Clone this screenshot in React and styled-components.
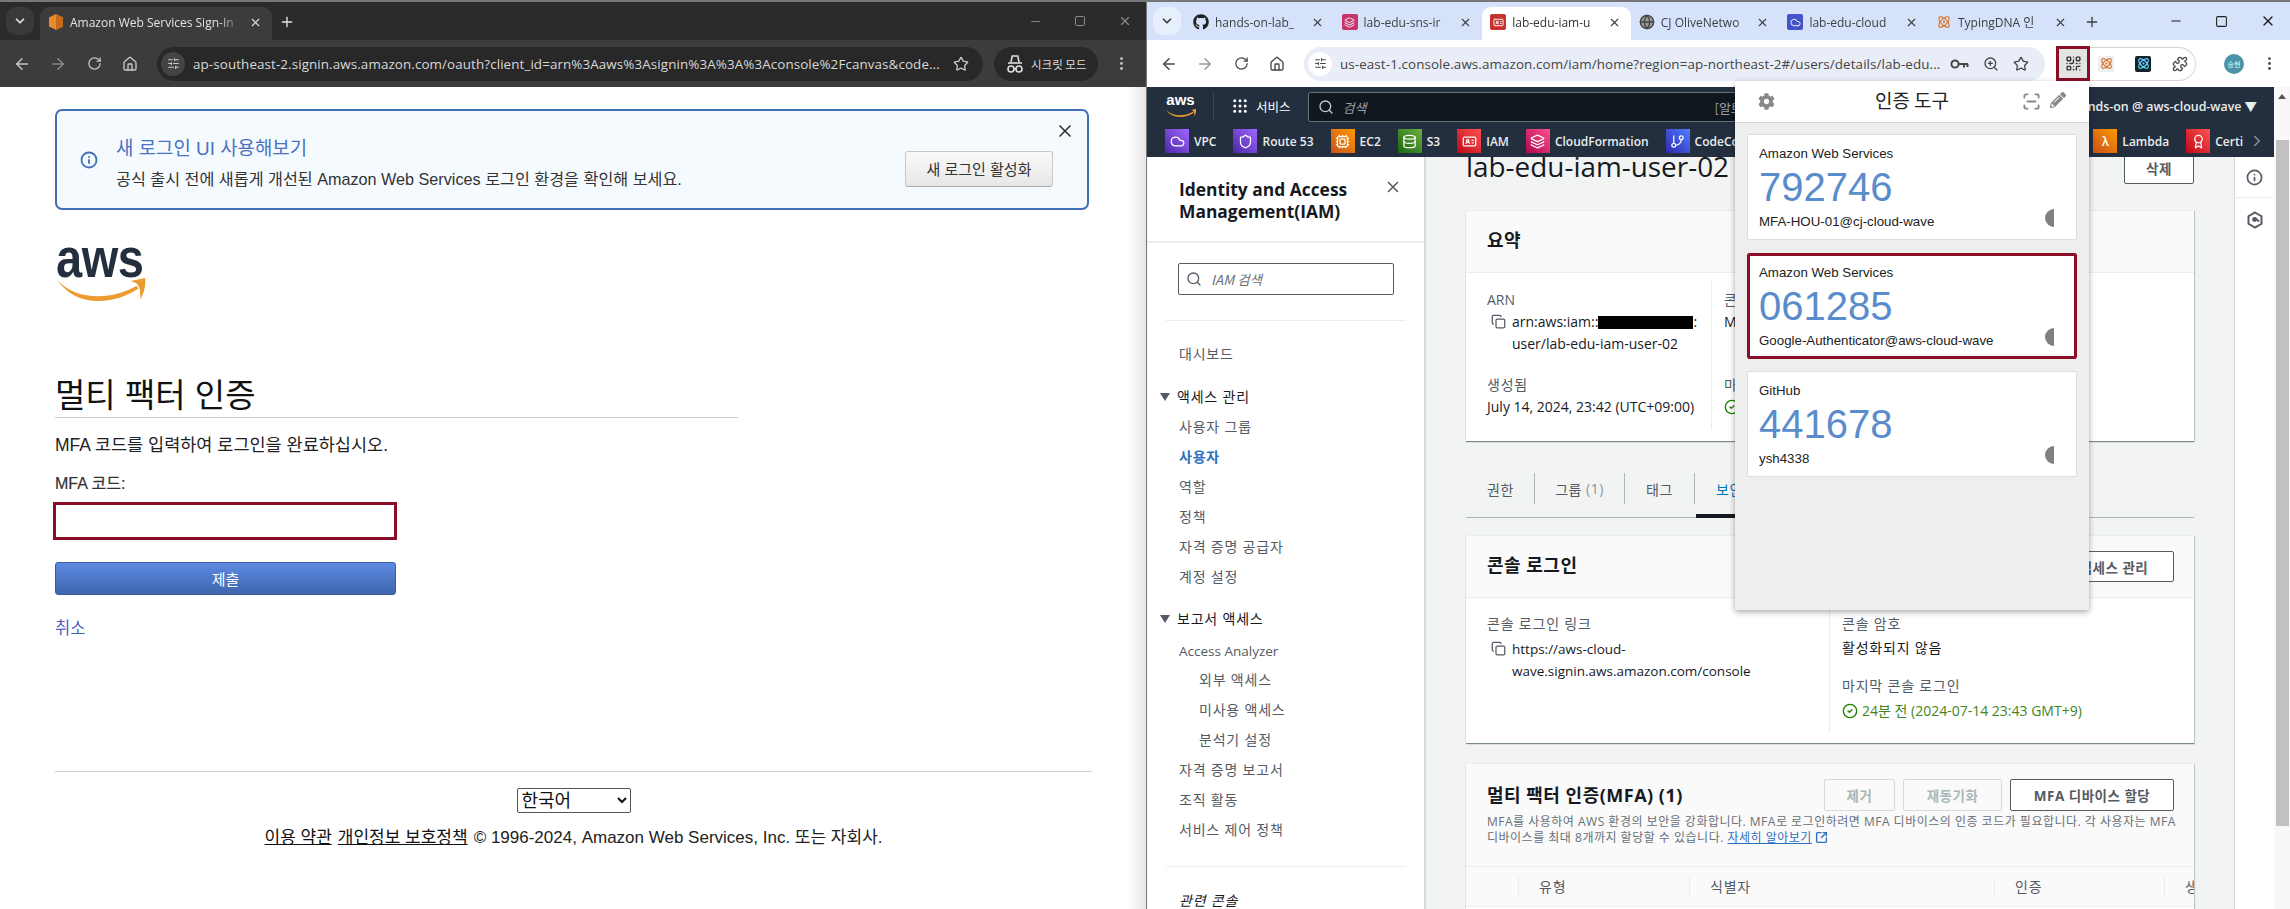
import React from 'react';
import styled, { createGlobalStyle } from 'styled-components';
import {
	ArrowLeft,
	ArrowRight,
	ChevronDown,
	ChevronRight,
	CircleCheck,
	Copy,
	House,
	Info,
	Minus,
	MoreVertical,
	Plus,
	Puzzle,
	QrCode,
	RotateCw,
	ScanLine,
	Search,
	SlidersHorizontal,
	Square,
	Star,
	SquareArrowOutUpRight,
	X,
	ZoomIn,
	Globe,
	Cloud,
	Shield,
	Cpu,
	Database,
	IdCard,
	Layers,
	GitBranch,
	Award,
	Atom,
	Grip,
} from 'lucide-react';
import { FaGithub, FaCog, FaPencilAlt } from 'react-icons/fa';

const KR = '"Noto Sans CJK KR", sans-serif';
const ARIAL = '"Liberation Sans", "Noto Sans CJK KR", sans-serif';
const UI = '"Open Sans", "Noto Sans CJK KR", sans-serif';

const GlobalStyle = createGlobalStyle`
	html, body {
		margin: 0;
		padding: 0;
		background: #fff;
	}
	* {
		box-sizing: border-box;
	}
`;

const Screen = styled.div`
	display: grid;
	grid-template-columns: 1146px 1144px;
	width: 2290px;
	height: 909px;
	overflow: hidden;
`;

const Window = styled.div`
	position: relative;
	display: flex;
	flex-direction: column;
	height: 909px;
	overflow: hidden;
	background: #fff;
	border-left: ${(p) => (p.$light ? '1px solid #777' : 'none')};
`;

const TabBar = styled.div`
	display: flex;
	align-items: flex-end;
	height: 40px;
	flex-shrink: 0;
	padding-left: 6px;
	background: ${(p) => (p.$light ? '#d5e2fa' : '#2b2b2b')};
	border-top: 2px solid #777;
	color: ${(p) => (p.$light ? '#3c4043' : '#e3e3e3')};
`;

const TabSearch = styled.div`
	display: flex;
	align-items: center;
	justify-content: center;
	width: 28px;
	height: 28px;
	align-self: center;
	margin-right: ${(p) => (p.$light ? '4px' : '6px')};
	border-radius: 10px;
	background: ${(p) => (p.$light ? '#e8effc' : '#3a3a3a')};
`;

const Tab = styled.div`
	display: flex;
	align-items: center;
	gap: 6px;
	height: 33px;
	width: ${(p) => p.$width || 148.6}px;
	padding: 0 10px 3px 8px;
	flex-shrink: 0;
	border-radius: 9px 9px 0 0;
	background: ${(p) => (p.$active ? p.$activeBg : 'transparent')};
	font: 12px ${UI};
`;

const TabTitle = styled.span`
	flex: 1;
	min-width: 0;
	overflow: hidden;
	white-space: nowrap;
	color: ${(p) => (p.$active ? '#333' : 'inherit')};
	-webkit-mask-image: linear-gradient(90deg, #000 85%, transparent);
`;

const Favicon = styled.span`
	display: flex;
	align-items: center;
	justify-content: center;
	width: 16px;
	height: 16px;
	flex-shrink: 0;
	border-radius: 2px;
	background: ${(p) => p.$bg || 'transparent'};
	color: ${(p) => p.$color || '#fff'};
`;

const NewTab = styled.div`
	display: flex;
	align-items: center;
	height: 36px;
	margin-left: 7px;
`;

const WindowControls = styled.div`
	display: flex;
	align-items: center;
	gap: 32px;
	margin-left: auto;
	padding-right: 14px;
	height: 38px;
	color: ${(p) => (p.$light ? '#222' : '#8a8a8a')};
`;

const Toolbar = styled.div`
	display: flex;
	align-items: center;
	height: 47px;
	flex-shrink: 0;
	padding: 0 0 0 13px;
	background: ${(p) => (p.$light ? '#fff' : '#3c3c3c')};
	color: ${(p) => (p.$light ? '#474747' : '#c7c7c7')};
`;

const ToolIcon = styled.span`
	display: flex;
	align-items: center;
	justify-content: center;
	width: 18px;
	margin-right: 18px;
	flex-shrink: 0;
	opacity: ${(p) => (p.$dim ? 0.55 : 1)};
`;

const Omnibox = styled.div`
	display: flex;
	align-items: center;
	width: ${(p) => p.$width}px;
	height: 34px;
	padding: 0 ${(p) => (p.$light ? 16 : 14)}px 0 4px;
	flex-shrink: 0;
	border-radius: 17px;
	background: ${(p) => (p.$light ? '#e8edf8' : '#282828')};
`;

const SiteChip = styled.span`
	display: flex;
	align-items: center;
	justify-content: center;
	width: 24px;
	height: 24px;
	margin-right: 8px;
	flex-shrink: 0;
	border-radius: 50%;
	background: ${(p) => (p.$light ? '#fff' : '#444')};
`;

const UrlText = styled.span`
	flex: 1;
	overflow: hidden;
	white-space: nowrap;
	font: 13.4px ${UI};
	letter-spacing: 0.1px;
	color: ${(p) => (p.$light ? '#444' : '#d8d8d8')};
`;

const OmniIcons = styled.span`
	display: flex;
	align-items: center;
	gap: 14px;
	margin-left: 4px;
`;

const IncognitoPill = styled.div`
	display: flex;
	align-items: center;
	gap: 7px;
	width: 104px;
	height: 34px;
	margin-left: 11px;
	padding-left: 12px;
	border-radius: 17px;
	background: #282828;
	font: 11.5px ${KR};
	color: #ddd;
`;

const MenuDots = styled.span`
	display: flex;
	margin-left: ${(p) => p.$left}px;
`;

const ExtRed = styled.span`
	display: flex;
	align-items: center;
	justify-content: center;
	width: 34px;
	height: 35px;
	margin-left: 11px;
	border: 3px solid #8b0d26;
	background: #e4e4e4;
	color: #333;
`;

const ExtPill = styled.div`
	display: flex;
	align-items: center;
	gap: 21px;
	width: 106px;
	height: 34px;
	padding: 0 0 0 8px;
	border: 1px solid #d5d5d5;
	border-left: none;
	border-radius: 0 17px 17px 0;
`;

const Avatar = styled.span`
	display: flex;
	align-items: center;
	justify-content: center;
	width: 20px;
	height: 20px;
	margin-left: 28px;
	border-radius: 50%;
	background: #4b93a8;
	color: #dff;
	font: 7px ${KR};
`;

/* left page */
const LoginPage = styled.div`
	flex: 1;
	padding: 22px 0 0 55px;
	font-family: ${ARIAL};
	color: #111;
`;

const Banner = styled.div`
	position: relative;
	display: flex;
	align-items: center;
	width: 1034px;
	height: 101px;
	padding: 0 34px 0 23px;
	border: 2px solid #3f6fb5;
	border-radius: 7px;
	background: #f5faff;
`;

const BannerText = styled.div`
	flex: 1;
	margin-left: 18px;
	padding-top: 5px;
`;

const BannerTitle = styled.div`
	font: 18.9px/26px ${ARIAL};
	color: #4a72c0;
`;

const BannerSub = styled.div`
	margin-top: 7px;
	font: 16.2px/20px ${ARIAL};
	color: #333;
`;

const BannerButton = styled.button`
	width: 148px;
	height: 36px;
	margin-top: 18px;
	border: 1px solid #c8c8c8;
	border-bottom-color: #aaa;
	border-radius: 3px;
	background: linear-gradient(#fafafa, #e6e6e6);
	font: 15px ${ARIAL};
	color: #333;
`;

const BannerClose = styled.span`
	position: absolute;
	top: 10px;
	right: 12px;
	display: flex;
	color: #333;
`;

const Logo = styled.div`
	width: 92px;
	height: 58px;
	margin-top: 33px;
`;

const LogoWord = styled.div`
	height: 35px;
	padding-left: 1px;
	font: bold 47px/24px ${ARIAL};
	letter-spacing: -0.5px;
	color: #232f3e;
	transform: scaleY(1.2);
	transform-origin: top;
`;

const LoginHeading = styled.h1`
	width: 683px;
	height: 44px;
	margin: 73px 0 0;
	border-bottom: 1px solid #ccc;
	font: 400 33px/44px ${ARIAL};
	color: #111;
`;

const LoginIntro = styled.p`
	margin: 15px 0 0;
	font: 17.5px/24px ${ARIAL};
	color: #222;
`;

const LoginLabel = styled.label`
	display: block;
	margin-top: 17px;
	font: 16px/20px ${ARIAL};
	-webkit-text-stroke: 0.2px #333;
	color: #333;
`;

const MfaInput = styled.input`
	display: block;
	width: 344px;
	height: 38px;
	margin: 8px 0 0 -2px;
	border: 3px solid #8b0d26;
	outline: none;
	background: #fff;
`;

const SubmitButton = styled.button`
	display: block;
	width: 341px;
	height: 33px;
	margin-top: 22px;
	border: 1px solid #3b5c9c;
	border-radius: 3px;
	background: linear-gradient(#5d8ae2, #3f66ad);
	font: 15px ${ARIAL};
	color: #fff;
`;

const CancelLink = styled.a`
	display: block;
	margin-top: 23px;
	font: 16.5px/20px ${ARIAL};
	color: #4a5fc0;
`;

const FooterRule = styled.div`
	width: 1037px;
	margin-top: 133px;
	border-top: 1px solid #ccc;
`;

const FooterBlock = styled.div`
	display: flex;
	flex-direction: column;
	align-items: center;
	width: 1037px;
	padding-top: 16px;
`;

const LangSelect = styled.select`
	width: 114px;
	height: 25px;
	padding: 0;
	border: 1px solid #555;
	border-radius: 2px;
	background: #fff;
	font: 18px ${ARIAL};
	color: #111;
`;

const FooterText = styled.div`
	margin-top: 13px;
	font: 17px/24px ${ARIAL};
	color: #222;
	a {
		color: #111;
		text-decoration: underline;
		margin-right: 6px;
	}
`;

const EdgeShade = styled.div`
	position: absolute;
	top: 87px;
	right: 0;
	bottom: 0;
	width: 18px;
	background: linear-gradient(90deg, rgba(0, 0, 0, 0), rgba(0, 0, 0, 0.1));
	pointer-events: none;
`;

/* console */
const ConsoleFrame = styled.div`
	display: flex;
	flex: 1;
	min-height: 0;
`;

const ConsoleColumn = styled.div`
	display: flex;
	flex-direction: column;
	flex: 1;
	min-width: 0;
`;

const Scrollbar = styled.div`
	display: flex;
	flex-direction: column;
	align-items: center;
	width: 16px;
	flex-shrink: 0;
	background: #f8f8f8;
`;

const ScrollArrow = styled.span`
	width: 0;
	height: 0;
	margin-top: 7px;
	border: 4px solid transparent;
	border-top: none;
	border-bottom: 5px solid #555;
`;

const ScrollThumb = styled.span`
	width: 13px;
	height: 686px;
	margin-top: 41px;
	background: #c1c1c1;
`;

const NavTop = styled.div`
	display: flex;
	align-items: center;
	height: 38px;
	padding-left: 18px;
	background: #232f3e;
	font: 600 13px ${UI};
	color: #fff;
`;

const NavLogo = styled.div`
	width: 31px;
	font: bold 15px/12px ${ARIAL};
	color: #fff;
	text-align: center;
`;

const NavDivider = styled.span`
	width: 1px;
	height: 26px;
	margin: 0 17px;
	background: #414750;
`;

const ServicesLabel = styled.span`
	margin-left: 7px;
	font: 12.5px ${KR};
`;

const GlobalSearch = styled.div`
	display: flex;
	align-items: center;
	gap: 9px;
	width: 440px;
	height: 30px;
	margin: 2px 0 0 17px;
	padding-left: 9px;
	border: 1px solid #687078;
	border-radius: 2px;
	background: #10171f;
	font: italic 13px ${KR};
	color: #9aa0a6;
`;

const SearchHint = styled.span`
	margin-left: auto;
	width: 32px;
	overflow: hidden;
	white-space: nowrap;
	font: 13px ${KR};
`;

const AccountMenu = styled.div`
	margin-left: auto;
	padding-right: 17px;
	white-space: nowrap;
	font: 600 12.4px ${UI};
	color: #eaeded;
`;

const NavBar2 = styled.div`
	display: flex;
	align-items: center;
	gap: 17px;
	height: 32px;
	padding: 0 8px 0 18px;
	background: #232f3e;
	overflow: hidden;
`;

const NavChevron = styled(ChevronRight)`
	margin-left: -12px;
	flex-shrink: 0;
`;

const Shortcut = styled.span`
	display: flex;
	align-items: center;
	gap: 5px;
	flex-shrink: 0;
	margin-left: ${(p) => (p.$push ? 'auto' : '0')};
	font: 600 12px ${UI};
	color: #eaeded;
`;

const ShortcutIcon = styled.span`
	display: flex;
	align-items: center;
	justify-content: center;
	width: 24px;
	height: 24px;
	color: #fff;
	background: linear-gradient(45deg, ${(p) => p.$from}, ${(p) => p.$to});
`;

const ConsoleBody = styled.div`
	display: flex;
	flex: 1;
	min-height: 0;
`;

const Sidebar = styled.aside`
	width: 279px;
	flex-shrink: 0;
	border-right: 2px solid #d5dbdb;
	background: #fff;
	font-family: ${UI};
`;

const SideHeader = styled.div`
	display: flex;
	justify-content: space-between;
	height: 86px;
	padding: 21px 22px 0 32px;
	border-bottom: 2px solid #eaeded;
`;

const SideTitle = styled.div`
	font: 700 17.4px/22px ${UI};
	color: #16191f;
`;

const SideSearch = styled.div`
	display: flex;
	align-items: center;
	gap: 9px;
	width: 216px;
	height: 32px;
	margin: 20px 0 0 31px;
	padding-left: 7px;
	border: 1px solid #545b64;
	border-radius: 2px;
	font: italic 13.5px ${KR};
	color: #687078;
`;

const SideRule = styled.div`
	width: 240px;
	margin: ${(p) => p.$top}px 0 0 19px;
	border-top: 1px solid #eaeded;
`;

const NavItem = styled.div`
	height: ${(p) => p.$h || 30}px;
	margin-top: ${(p) => p.$top || 0}px;
	padding-left: ${(p) => (p.$sub ? 52 : 32)}px;
	font: ${(p) => (p.$on ? 600 : 400)} ${(p) => (p.$latin ? 13.5 : 14)}px/30px ${UI};
	letter-spacing: ${(p) => (p.$latin ? 0 : 0.8)}px;
	color: ${(p) => (p.$on ? '#2f6fc0' : '#545b64')};
`;

const NavGroup = styled.div`
	display: flex;
	align-items: center;
	gap: 7px;
	height: 30px;
	margin-top: ${(p) => p.$top}px;
	padding-left: 13px;
	font: 400 14px/30px ${UI};
	letter-spacing: 0.8px;
	color: #16191f;
`;

const Caret = styled.span`
	width: 0;
	height: 0;
	border: 5px solid transparent;
	border-bottom: none;
	border-top: 8px solid #545b64;
`;

const RelatedLabel = styled.div`
	margin-top: 24px;
	padding-left: 32px;
	font: italic 14px/20px ${UI};
	letter-spacing: 0.8px;
	color: #16191f;
`;

const Main = styled.main`
	flex: 1;
	min-width: 0;
	overflow: hidden;
	padding: 0 40px;
	background: #f2f3f3;
	font-family: ${UI};
`;

const PageHead = styled.div`
	display: flex;
	justify-content: space-between;
	align-items: flex-end;
	height: 32px;
	margin-top: -5px;
`;

const PageTitle = styled.h1`
	margin: 0;
	font: 400 27.9px/36px ${UI};
	color: #16191f;
`;

const OutlineButton = styled.button`
	height: ${(p) => p.$h || 32}px;
	width: ${(p) => p.$w}px;
	padding: 0;
	flex-shrink: 0;
	border: 1px solid ${(p) => (p.$off ? '#d5dbdb' : '#545b64')};
	border-radius: 2px;
	background: ${(p) => (p.$off ? '#fafafa' : '#fff')};
	font: 700 13.5px ${UI};
	letter-spacing: 0.5px;
	color: ${(p) => (p.$off ? '#aab7b8' : '#545b64')};
`;

const Card = styled.section`
	margin-top: ${(p) => p.$top}px;
	height: ${(p) => p.$h}px;
	background: #fff;
	border-top: 1px solid #eaeded;
	box-shadow: 0 1px 1px 0 rgba(0, 28, 36, 0.4), 1px 1px 1px 0 rgba(0, 28, 36, 0.15);
`;

const CardHeader = styled.div`
	display: flex;
	align-items: center;
	justify-content: space-between;
	height: 62px;
	padding: 0 20px 0 21px;
	border-bottom: 1px solid #eaeded;
	background: #fafafa;
`;

const CardTitle = styled.h2`
	margin: 0 0 ${(p) => p.$lift || 0}px;
	font: 700 18px/24px ${UI};
	letter-spacing: 0.5px;
	color: #16191f;
`;

const SummaryGrid = styled.div`
	display: grid;
	grid-template-columns: 224px 1fr;
	padding: 6px 0 0 21px;
`;

const LinkGrid = styled.div`
	display: grid;
	grid-template-columns: 342px 1fr;
	padding: 11px 0 0 21px;
`;

const FieldColumn = styled.div`
	height: ${(p) => p.$h}px;
	padding: ${(p) => p.$pad}px 0 0 ${(p) => (p.$sep ? 12 : 0)}px;
	border-left: ${(p) => (p.$sep ? '1px solid #eaeded' : 'none')};
	white-space: nowrap;
`;

const FieldLabel = styled.div`
	margin-top: ${(p) => p.$top || 0}px;
	font: 14px/22px ${UI};
	letter-spacing: ${(p) => (p.$latin ? 0 : 0.8)}px;
	color: #545b64;
`;

const FieldValue = styled.div`
	display: flex;
	align-items: flex-start;
	gap: ${(p) => (p.$icon ? 6 : 4)}px;
	margin-top: ${(p) => p.$top || 0}px;
	padding-left: ${(p) => (p.$icon ? 4 : 0)}px;
	font: ${(p) => (p.$small ? 13.5 : 14)}px/22px ${UI};
	letter-spacing: ${(p) => (p.$kr ? 0.8 : 0)}px;
	color: ${(p) => p.$color || '#16191f'};
	svg {
		flex-shrink: 0;
		margin-top: 3px;
	}
`;

const Redacted = styled.span`
	display: inline-block;
	width: 95px;
	height: 13px;
	background: #000;
	vertical-align: -2px;
`;

const TabStrip = styled.div`
	display: flex;
	height: 45px;
	margin-top: 32px;
	border-bottom: 1px solid #aab7b8;
`;

const PageTab = styled.div`
	position: relative;
	display: flex;
	align-items: center;
	justify-content: ${(p) => (p.$center ? 'center' : 'flex-start')};
	width: ${(p) => p.$w}px;
	height: 31px;
	padding-left: ${(p) => (p.$center ? 0 : 21)}px;
	border-right: ${(p) => (p.$last ? 'none' : '1px solid #aab7b8')};
	font: 14px ${UI};
	letter-spacing: 0.5px;
	color: ${(p) => (p.$on ? '#0073bb' : '#545b64')};
	small {
		margin-left: 4px;
		font-size: 14px;
		color: #879596;
	}
	&::after {
		content: ${(p) => (p.$on ? '""' : 'none')};
		position: absolute;
		left: 1px;
		right: 0;
		bottom: -14px;
		height: 4px;
		background: #16191f;
	}
`;

const MfaHeader = styled.div`
	height: 103px;
	padding: 15px 20px 0 21px;
	border-bottom: 1px solid #eaeded;
	background: #fafafa;
`;

const MfaTop = styled.div`
	display: flex;
	align-items: center;
	justify-content: space-between;
	height: 32px;
`;

const MfaButtons = styled.div`
	display: flex;
	gap: 8px;
`;

const MfaDesc = styled.p`
	margin: 3px 0 0;
	font: 12px/16px ${UI};
	letter-spacing: 0.5px;
	white-space: nowrap;
	color: #687078;
	a {
		color: #2f6fc0;
		text-decoration: underline;
	}
`;

const OutLinkIcon = styled(SquareArrowOutUpRight)`
	vertical-align: -2px;
`;

const TableHead = styled.div`
	display: grid;
	grid-template-columns: 52px 171px 305px 170px 30px;
	height: 40px;
	align-items: center;
	border-bottom: 1px solid #eaeded;
	background: #fafafa;
	overflow: hidden;
`;

const HeadCell = styled.div`
	height: 20px;
	padding-left: 20px;
	border-left: ${(p) => (p.$plain ? 'none' : '1px solid #eaeded')};
	white-space: nowrap;
	font: 14px/20px ${UI};
	letter-spacing: 0.8px;
	color: #545b64;
`;

const RightRail = styled.div`
	display: flex;
	flex-direction: column;
	align-items: center;
	width: 40px;
	flex-shrink: 0;
	border-left: 1px solid #d5dbdb;
	background: #fff;
	color: #545b64;
`;

const RailButton = styled.div`
	display: flex;
	align-items: center;
	justify-content: center;
	width: 100%;
	height: ${(p) => p.$h}px;
	border-bottom: ${(p) => (p.$line ? '1px solid #eaeded' : 'none')};
`;

/* authenticator popup */
const Popup = styled.div`
	position: absolute;
	top: 81px;
	left: 588px;
	width: 354px;
	height: 529px;
	background: #eee;
	box-shadow: 0 2px 6px rgba(0, 0, 0, 0.35);
	font-family: ${ARIAL};
`;

const PopupHeader = styled.div`
	display: grid;
	grid-template-columns: 1fr auto 1fr;
	align-items: center;
	height: 42px;
	padding: 0 23px;
	background: #fff;
	border-bottom: 1px solid #d5d5d5;
	color: #888;
`;

const PopupTitle = styled.div`
	padding-bottom: 4px;
	font: 19px ${KR};
	color: #222;
`;

const PopupActions = styled.div`
	display: flex;
	justify-content: flex-end;
	gap: 9px;
`;

const EntryList = styled.div`
	display: flex;
	flex-direction: column;
	gap: 12.5px;
	padding: 11px 12px 0;
`;

const Entry = styled.div`
	position: relative;
	height: 106px;
	padding: 10px 11px;
	background: #fff;
	border: 1px solid ${(p) => (p.$marked ? '#8b0d26' : '#ddd')};
	box-shadow: ${(p) => (p.$marked ? 'inset 0 0 0 2px #8b0d26' : 'none')};
	border-radius: 2px;
`;

const EntryIssuer = styled.div`
	font: 13.3px/18px ${ARIAL};
	color: #222;
`;

const EntryCode = styled.div`
	margin-top: 2px;
	font: 40px/44px ${ARIAL};
	color: #5a8ccb;
`;

const EntryAccount = styled.div`
	margin-top: 4px;
	font: 13.3px/18px ${ARIAL};
	color: #222;
`;

const EntryTimer = styled.span`
	position: absolute;
	right: 22px;
	bottom: 12px;
	width: 9px;
	height: 18px;
	border-radius: 9px 0 0 9px;
	background: #808080;
`;

const shortcuts = [
	{ name: 'VPC', from: '#4d27a8', to: '#a166ff', Icon: Cloud },
	{ name: 'Route 53', from: '#4d27a8', to: '#a166ff', Icon: Shield },
	{ name: 'EC2', from: '#c8511b', to: '#ff9900', Icon: Cpu },
	{ name: 'S3', from: '#1b660f', to: '#6cae3e', Icon: Database },
	{ name: 'IAM', from: '#bd0816', to: '#ff5252', Icon: IdCard },
	{ name: 'CloudFormation', from: '#b0084d', to: '#ff4f8b', Icon: Layers },
	{ name: 'CodeCommit', from: '#2e27ad', to: '#527fff', Icon: GitBranch },
];

const entries = [
	{ issuer: 'Amazon Web Services', code: '792746', account: 'MFA-HOU-01@cj-cloud-wave' },
	{ issuer: 'Amazon Web Services', code: '061285', account: 'Google-Authenticator@aws-cloud-wave', marked: true },
	{ issuer: 'GitHub', code: '441678', account: 'ysh4338' },
];

const browserTabs = [
	{ title: 'hands-on-lab_', icon: <FaGithub size={16} color='#222' /> },
	{ title: 'lab-edu-sns-ir', icon: <Favicon $bg='#c7336b'><Layers size={11} /></Favicon> },
	{ title: 'lab-edu-iam-u', active: true, icon: <Favicon $bg='#c8322c'><IdCard size={11} /></Favicon> },
	{ title: 'CJ OliveNetwo', icon: <Globe size={16} color='#444' fill='#999' /> },
	{ title: 'lab-edu-cloud', icon: <Favicon $bg='#4353c9'><Cloud size={11} /></Favicon> },
	{ title: 'TypingDNA 인', icon: <Favicon $color='#d9772b'><Atom size={14} /></Favicon> },
];

function IncognitoIcon() {
	return (
		<svg width='18' height='22' viewBox='0 0 18 22' fill='none' stroke='currentColor' strokeWidth='1.6'>
			<path d='M5 9l1.2-6h5.6L13 9' />
			<path d='M2 10h14' />
			<circle cx='5' cy='16' r='3' />
			<circle cx='13' cy='16' r='3' />
			<path d='M8 16h2' />
		</svg>
	);
}

function PasswordKeyIcon() {
	return (
		<svg width='19' height='14' viewBox='0 0 19 14' fill='none' stroke='currentColor' strokeWidth='2'>
			<circle cx='5' cy='7' r='3.6' />
			<path d='M9 7h9M14 7v3.5M17.5 7v3' />
		</svg>
	);
}

function HexBadgeIcon() {
	return (
		<svg width='18' height='18' viewBox='0 0 18 18' fill='none' stroke='currentColor' strokeWidth='2'>
			<path d='M9 1.5l6.5 3.75v7.5L9 16.5l-6.5-3.75v-7.5z' />
			<path d='M9 7l4 3.5' />
			<circle cx='8.5' cy='8.5' r='1.4' fill='currentColor' />
		</svg>
	);
}

function AwsSmile({ width, height }) {
	return (
		<svg width={width} height={height} viewBox='0 0 92 24'>
			<path d='M0 2c12 12 26 17 43 17 14 0 28-4 40-11l2 3C72 20 57 24 43 24 26 24 11 17 0 2z' fill='#ec9c31' />
			<path d='M77 3l15-3c1 7-1 16-5 22 0-6 0-11-2-14-1-2-4-4-8-5z' fill='#ec9c31' />
		</svg>
	);
}

function LoginWindow() {
	return (
		<Window>
			<TabBar>
				<TabSearch>
					<ChevronDown size={14} strokeWidth={3} />
				</TabSearch>
				<Tab $width={232} $active $activeBg='#3c3c3c'>
					<Favicon $color='#e98a2f'>
						<svg width='14' height='16' viewBox='0 0 14 16'>
							<path d='M7 0l7 3.5v9L7 16 0 12.5v-9z' fill='#e98a2f' />
							<path d='M7 0l7 3.5v9L7 16z' fill='#c76a1d' />
						</svg>
					</Favicon>
					<TabTitle>Amazon Web Services Sign-In</TabTitle>
					<X size={13} />
				</Tab>
				<NewTab>
					<Plus size={16} />
				</NewTab>
				<WindowControls>
					<Minus size={13} />
					<Square size={12} />
					<X size={14} />
				</WindowControls>
			</TabBar>
			<Toolbar>
				<ToolIcon><ArrowLeft size={18} /></ToolIcon>
				<ToolIcon $dim><ArrowRight size={18} /></ToolIcon>
				<ToolIcon><RotateCw size={15} /></ToolIcon>
				<ToolIcon><House size={16} /></ToolIcon>
				<Omnibox $width={826}>
					<SiteChip><SlidersHorizontal size={13} /></SiteChip>
					<UrlText>ap-southeast-2.signin.aws.amazon.com/oauth?client_id=arn%3Aaws%3Asignin%3A%3A%3Aconsole%2Fcanvas&amp;code...</UrlText>
					<OmniIcons><Star size={16} /></OmniIcons>
				</Omnibox>
				<IncognitoPill>
					<IncognitoIcon />
					시크릿 모드
				</IncognitoPill>
				<MenuDots $left={15}><MoreVertical size={17} /></MenuDots>
			</Toolbar>
			<LoginPage>
				<Banner>
					<Info size={18} color='#3f6fb5' strokeWidth={2.4} />
					<BannerText>
						<BannerTitle>새 로그인 UI 사용해보기</BannerTitle>
						<BannerSub>공식 출시 전에 새롭게 개선된 Amazon Web Services 로그인 환경을 확인해 보세요.</BannerSub>
					</BannerText>
					<BannerButton>새 로그인 활성화</BannerButton>
					<BannerClose><X size={20} /></BannerClose>
				</Banner>
				<Logo>
					<LogoWord>aws</LogoWord>
					<AwsSmile width={92} height={23} />
				</Logo>
				<LoginHeading>멀티 팩터 인증</LoginHeading>
				<LoginIntro>MFA 코드를 입력하여 로그인을 완료하십시오.</LoginIntro>
				<LoginLabel>MFA 코드:</LoginLabel>
				<MfaInput />
				<SubmitButton>제출</SubmitButton>
				<CancelLink>취소</CancelLink>
				<FooterRule />
				<FooterBlock>
					<LangSelect defaultValue='ko'>
						<option value='ko'>한국어</option>
					</LangSelect>
					<FooterText>
						<a>이용 약관</a>
						<a>개인정보 보호정책</a>
						© 1996-2024, Amazon Web Services, Inc. 또는 자회사.
					</FooterText>
				</FooterBlock>
			</LoginPage>
			<EdgeShade />
		</Window>
	);
}

function Authenticator() {
	return (
		<Popup>
			<PopupHeader>
				<FaCog size={17} />
				<PopupTitle>인증 도구</PopupTitle>
				<PopupActions>
					<ScanLine size={19} strokeWidth={2.4} />
					<FaPencilAlt size={16} />
				</PopupActions>
			</PopupHeader>
			<EntryList>
				{entries.map((entry) => (
					<Entry key={entry.code} $marked={entry.marked}>
						<EntryIssuer>{entry.issuer}</EntryIssuer>
						<EntryCode>{entry.code}</EntryCode>
						<EntryAccount>{entry.account}</EntryAccount>
						<EntryTimer />
					</Entry>
				))}
			</EntryList>
		</Popup>
	);
}

function ConsoleWindow() {
	return (
		<Window $light>
			<TabBar $light>
				<TabSearch $light>
					<ChevronDown size={14} strokeWidth={3} />
				</TabSearch>
				{browserTabs.map((tab) => (
					<Tab key={tab.title} $active={tab.active} $activeBg='#fff'>
						{tab.icon}
						<TabTitle $active={tab.active}>{tab.title}</TabTitle>
						<X size={13} />
					</Tab>
				))}
				<NewTab>
					<Plus size={16} />
				</NewTab>
				<WindowControls $light>
					<Minus size={14} />
					<Square size={13} />
					<X size={16} />
				</WindowControls>
			</TabBar>
			<Toolbar $light>
				<ToolIcon><ArrowLeft size={18} /></ToolIcon>
				<ToolIcon $dim><ArrowRight size={18} /></ToolIcon>
				<ToolIcon><RotateCw size={15} /></ToolIcon>
				<ToolIcon><House size={16} /></ToolIcon>
				<Omnibox $width={741} $light>
					<SiteChip $light><SlidersHorizontal size={13} /></SiteChip>
					<UrlText $light>us-east-1.console.aws.amazon.com/iam/home?region=ap-northeast-2#/users/details/lab-edu...</UrlText>
					<OmniIcons>
						<PasswordKeyIcon />
						<ZoomIn size={16} />
						<Star size={16} />
					</OmniIcons>
				</Omnibox>
				<ExtRed><QrCode size={17} /></ExtRed>
				<ExtPill>
					<Favicon $bg='#eee' $color='#d9772b'><Atom size={13} /></Favicon>
					<Favicon $bg='#15232e' $color='#61dafb'><Atom size={13} /></Favicon>
					<Puzzle size={16} />
				</ExtPill>
				<Avatar>승현</Avatar>
				<MenuDots $left={17}><MoreVertical size={17} /></MenuDots>
			</Toolbar>
			<ConsoleFrame>
				<ConsoleColumn>
					<NavTop>
						<NavLogo>
							aws
							<AwsSmile width={30} height={8} />
						</NavLogo>
						<NavDivider />
						<Grip size={18} />
						<ServicesLabel>서비스</ServicesLabel>
						<GlobalSearch>
							<Search size={16} color='#ccc' />
							검색
							<SearchHint>[알트+S]</SearchHint>
						</GlobalSearch>
						<AccountMenu>hands-on @ aws-cloud-wave ▼</AccountMenu>
					</NavTop>
					<NavBar2>
						{shortcuts.map(({ name, from, to, Icon }) => (
							<Shortcut key={name}>
								<ShortcutIcon $from={from} $to={to}><Icon size={15} /></ShortcutIcon>
								{name}
							</Shortcut>
						))}
						<Shortcut $push>
							<ShortcutIcon $from='#c8511b' $to='#ff9900'>λ</ShortcutIcon>
							Lambda
						</Shortcut>
						<Shortcut>
							<ShortcutIcon $from='#bd0816' $to='#ff5252'><Award size={15} /></ShortcutIcon>
							Certi
						</Shortcut>
						<NavChevron size={18} color='#879596' />
					</NavBar2>
					<ConsoleBody>
						<Sidebar>
							<SideHeader>
								<SideTitle>Identity and Access<br />Management(IAM)</SideTitle>
								<X size={18} color='#545b64' />
							</SideHeader>
							<SideSearch>
								<Search size={16} color='#545b64' />
								IAM 검색
							</SideSearch>
							<SideRule $top={25} />
							<NavItem $top={18}>대시보드</NavItem>
							<NavGroup $top={13}><Caret />액세스 관리</NavGroup>
							<NavItem>사용자 그룹</NavItem>
							<NavItem $on>사용자</NavItem>
							<NavItem>역할</NavItem>
							<NavItem>정책</NavItem>
							<NavItem>자격 증명 공급자</NavItem>
							<NavItem>계정 설정</NavItem>
							<NavGroup $top={12}><Caret />보고서 액세스</NavGroup>
							<NavItem $top={2} $h={29} $latin>Access Analyzer</NavItem>
							<NavItem $sub>외부 액세스</NavItem>
							<NavItem $sub>미사용 액세스</NavItem>
							<NavItem $sub>분석기 설정</NavItem>
							<NavItem>자격 증명 보고서</NavItem>
							<NavItem>조직 활동</NavItem>
							<NavItem>서비스 제어 정책</NavItem>
							<SideRule $top={21} />
							<RelatedLabel>관련 콘솔</RelatedLabel>
						</Sidebar>
						<Main>
							<PageHead>
								<PageTitle>lab-edu-iam-user-02</PageTitle>
								<OutlineButton $w={70}>삭제</OutlineButton>
							</PageHead>
							<Card $top={26} $h={231}>
								<CardHeader><CardTitle $lift={4}>요약</CardTitle></CardHeader>
								<SummaryGrid>
									<FieldColumn $h={151} $pad={10}>
										<FieldLabel $latin>ARN</FieldLabel>
										<FieldValue $icon>
											<Copy size={15} color='#545b64' />
											<span>arn:aws:iam::<Redacted />:<br />user/lab-edu-iam-user-02</span>
										</FieldValue>
										<FieldLabel $top={19}>생성됨</FieldLabel>
										<FieldValue>July 14, 2024, 23:42 (UTC+09:00)</FieldValue>
									</FieldColumn>
									<FieldColumn $h={151} $pad={10} $sep>
										<FieldLabel>콘솔 액세스</FieldLabel>
										<FieldValue>MFA 활성화됨</FieldValue>
										<FieldLabel $top={41}>마지막 콘솔 로그인</FieldLabel>
										<FieldValue $color='#1d8102'><CircleCheck size={16} />24분 전</FieldValue>
									</FieldColumn>
								</SummaryGrid>
							</Card>
							<TabStrip>
								<PageTab $w={69}>권한</PageTab>
								<PageTab $center $w={90}>그룹<small>(1)</small></PageTab>
								<PageTab $center $w={70}>태그</PageTab>
								<PageTab $on $last $w={180}>보안 자격 증명</PageTab>
							</TabStrip>
							<Card $top={17} $h={208}>
								<CardHeader>
									<CardTitle $lift={4}>콘솔 로그인</CardTitle>
									<OutlineButton $w={150} $h={31}>콘솔 액세스 관리</OutlineButton>
								</CardHeader>
								<LinkGrid>
									<FieldColumn $h={123} $pad={4}>
										<FieldLabel>콘솔 로그인 링크</FieldLabel>
										<FieldValue $icon $small $top={3}>
											<Copy size={15} color='#545b64' />
											<span>https://aws-cloud-<br />wave.signin.aws.amazon.com/console</span>
										</FieldValue>
									</FieldColumn>
									<FieldColumn $h={123} $pad={4} $sep>
										<FieldLabel>콘솔 암호</FieldLabel>
										<FieldValue $kr $top={2}>활성화되지 않음</FieldValue>
										<FieldLabel $top={16}>마지막 콘솔 로그인</FieldLabel>
										<FieldValue $top={3} $color='#3f8624'>
											<CircleCheck size={16} color='#1d8102' />
											24분 전 (2024-07-14 23:43 GMT+9)
										</FieldValue>
									</FieldColumn>
								</LinkGrid>
							</Card>
							<Card $top={20} $h={180}>
								<MfaHeader>
									<MfaTop>
										<CardTitle>멀티 팩터 인증(MFA) (1)</CardTitle>
										<MfaButtons>
											<OutlineButton $off $w={71}>제거</OutlineButton>
											<OutlineButton $off $w={99}>재동기화</OutlineButton>
											<OutlineButton $w={164}>MFA 디바이스 할당</OutlineButton>
										</MfaButtons>
									</MfaTop>
									<MfaDesc>
										MFA를 사용하여 AWS 환경의 보안을 강화합니다. MFA로 로그인하려면 MFA 디바이스의 인증 코드가 필요합니다. 각 사용자는 MFA
										<br />
										디바이스를 최대 8개까지 할당할 수 있습니다. <a>자세히 알아보기</a>{' '}
										<OutLinkIcon size={13} color='#2f6fc0' strokeWidth={2.6} />
									</MfaDesc>
								</MfaHeader>
								<TableHead>
									<HeadCell $plain />
									<HeadCell>유형</HeadCell>
									<HeadCell>식별자</HeadCell>
									<HeadCell>인증</HeadCell>
									<HeadCell>생성</HeadCell>
								</TableHead>
							</Card>
						</Main>
						<RightRail>
							<RailButton $h={41} $line><Info size={17} strokeWidth={2.4} /></RailButton>
							<RailButton $h={44}><HexBadgeIcon /></RailButton>
						</RightRail>
					</ConsoleBody>
				</ConsoleColumn>
				<Scrollbar>
					<ScrollArrow />
					<ScrollThumb />
				</Scrollbar>
			</ConsoleFrame>
			<Authenticator />
		</Window>
	);
}

export default function App() {
	return (
		<>
			<GlobalStyle />
			<Screen>
				<LoginWindow />
				<ConsoleWindow />
			</Screen>
		</>
	);
}
